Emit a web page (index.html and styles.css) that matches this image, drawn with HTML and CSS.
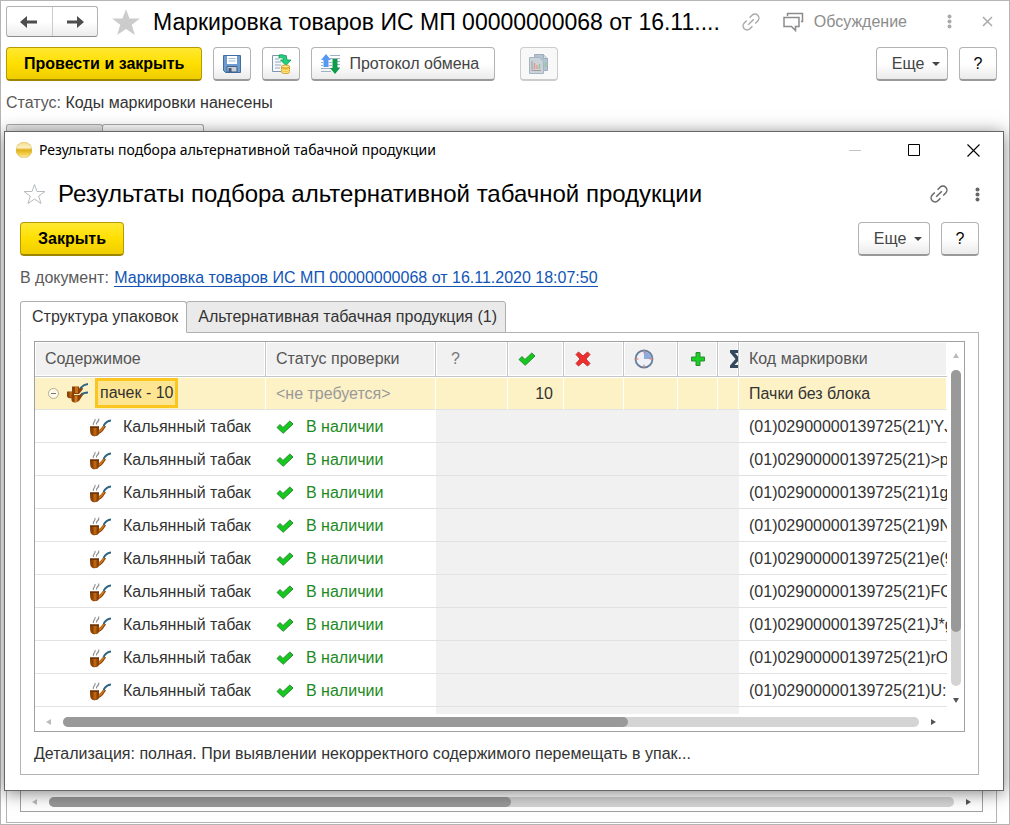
FILE: index.html
```html
<!DOCTYPE html>
<html lang="ru">
<head>
    <meta charset="utf-8">
    <title>Маркировка товаров ИС МП</title>
    <link rel="stylesheet" href="styles.css">
</head>
<body>
    <svg class="sprite" aria-hidden="true">
        <symbol id="check" viewBox="0 0 18 14">
            <path d="M1 7.5 4 4.5 7 7.5 13.8 1 17 4 7.2 13.3z" fill="#14c81e" stroke="#2c8a32" stroke-width="1"/>
        </symbol>
        <symbol id="pipe" viewBox="0 0 21 20">
            <path d="M0 9.500h9v3.500c2-1 3-3.500 5-5l2 1.500c-2 2.500-3.500 6-7 7.500-1 2.500-6 3-7.500 1C0 17 0 13 0 9.500z" fill="#8a4206"/>
            <path d="M3.500 10.500h3v8h-3z" fill="#bd6410"/>
            <path d="M9 13.500c2-1 3-3.500 5-5l1 .800c-2 2-3 5-6 6.500z" fill="#d07a1c"/>
            <path d="M0 9.500h9v1.200H0z" fill="#5e2b05"/>
            <path d="M13.500 9C15 6 17 3.800 21 3.500" stroke="#2f6580" stroke-width="1.800" fill="none"/>
            <path d="M3.500 8C2 5.500 6 5 5 2M6.500 7.500C5.500 5 9.500 5 8.800 1.500" stroke="#8c8c8c" stroke-width="1.100" fill="none"/>
        </symbol>
        <symbol id="pipes" viewBox="0 0 21 20">
            <path d="M5 3.500h7v2l3-1.500 1 2-4 5H5z" fill="#8a4206"/>
            <path d="M8 4h3v6H8z" fill="#c96f17"/>
            <path d="M0 8.500h7v6c-2 1.500-6 1-7-1z" fill="#8a4206"/>
            <path d="M2.500 9h2.500v5.500H2.500z" fill="#bd6410"/>
            <path d="M4.500 12h8l2.500-2.500 1.500 1.500-3.500 5.500c-1.500 3.500-7.500 4-8.500 1z" fill="#8a4206"/>
            <path d="M7.500 12.500h3v6.500h-3z" fill="#d0791d"/>
            <path d="M13 5.500c2-2 3-4 8-4.500M14.500 12c1.500-2 3-2.500 6.500-2.500" stroke="#2f6580" stroke-width="1.800" fill="none"/>
        </symbol>
        <symbol id="link" viewBox="0 0 20 20">
            <g fill="none" stroke="currentColor" stroke-width="1.500" transform="rotate(-45 10 10)">
                <path d="M8 14H4.500a4 4 0 0 1 0-8H8"/>
                <path d="M12 6h3.500a4 4 0 0 1 0 8H12"/>
                <path d="M6 10h8"/>
            </g>
        </symbol>
        <symbol id="dots" viewBox="0 0 5 15">
            <g fill="currentColor">
                <circle cx="2.500" cy="2.500" r="2"/>
                <circle cx="2.500" cy="7.500" r="2"/>
                <circle cx="2.500" cy="12.500" r="2"/>
            </g>
        </symbol>
    </svg>

    <div class="app">
        <header class="app-header">
            <div class="nav">
                <button aria-label="Назад">
                    <svg width="18" height="12" viewBox="0 0 18 12"><path d="M0 6l7-6v4.500h10v3H7V12z" fill="#4d4d4d"/></svg>
                </button>
                <button aria-label="Вперед">
                    <svg width="18" height="12" viewBox="0 0 18 12"><path d="M18 6l-7-6v4.500H1v3h10V12z" fill="#4d4d4d"/></svg>
                </button>
            </div>
            <svg class="app-star" width="28" height="28" viewBox="0 0 30 28"><path d="M15 0l3.800 10.300H30l-8.800 6.700L24.500 28 15 21.500 5.500 28l3.300-11L0 10.300h11.200z" fill="#ccc"/></svg>
            <h1>Маркировка товаров ИС МП 00000000068 от 16.11....</h1>
            <div class="app-tools">
                <svg width="20" height="20"><use href="#link"/></svg>
                <button class="plain discuss">
                    <svg width="21" height="20" viewBox="0 0 21 20" fill="none" stroke="#8c8c8c" stroke-width="1.500"><path d="M4.500 4V1.500h15v8H18M1 5.500h15v9h-3.500v4l-4-4H1z"/></svg>
                    Обсуждение
                </button>
                <button class="plain dots" aria-label="Меню"><svg width="5" height="15"><use href="#dots"/></svg></button>
                <button class="plain" aria-label="Закрыть окно"><svg width="11" height="11" viewBox="0 0 11 11" stroke="#aaa" stroke-width="1.500"><path d="M1 1l9 9M10 1l-9 9"/></svg></button>
            </div>
        </header>

        <div class="commands app-commands">
            <button class="btn primary">Провести и закрыть</button>
            <button class="btn icon" aria-label="Записать">
                <svg width="18" height="18" viewBox="0 0 18 18">
                    <path d="M.5.500h17v17h-15l-2-2z" fill="#6b9bd1" stroke="#3f6ea5"/>
                    <path d="M4 1h10v8H4z" fill="#fff"/>
                    <path d="M5.500 3.500h7M5.500 6h7" stroke="#9db7d6"/>
                    <path d="M4 11.500h10V17H4z" fill="#c9ced4" stroke="#3f5f86"/>
                    <path d="M5.500 13h3v4h-3z" fill="#3b5b83"/>
                </svg>
            </button>
            <button class="btn icon" aria-label="Провести">
                <svg width="20" height="20" viewBox="0 0 20 20">
                    <path d="M1.500 1.500h14v16h-14z" fill="#f6f9fc" stroke="#7d95ad"/>
                    <path d="M4 5h4M4 8h6M4 11h6M4 14h5" stroke="#93a7bb"/>
                    <path d="M8 1c5-1 8 1 8 5h4l-5 5.500L9.500 6h3C12 4 11 3 8 4z" fill="#22d17a" stroke="#0e9b55" stroke-width=".8"/>
                    <path d="M10.500 12v6c0 2 8 2 8 0v-6z" fill="#f2c33c" stroke="#c68f17" stroke-width=".8"/>
                    <ellipse cx="14.500" cy="12.500" rx="4" ry="1.500" fill="#ffe98a" stroke="#c68f17" stroke-width=".8"/>
                    <path d="M10.500 15c0 2 8 2 8 0M10.500 17c0 2 8 2 8 0" fill="none" stroke="#fff0a8" stroke-width=".8"/>
                </svg>
            </button>
            <button class="btn protocol">
                <svg width="21" height="20" viewBox="0 0 21 20">
                    <path d="M10 1.500h10M10 4.500h10M17 7.500h3M17 10.500h3M17 13.500h3M1 8.500h2M1 11.500h2M1 14.500h10M1 17.500h10M9 8.500h3M9 11.500h3" stroke="#9fb0c1"/>
                    <path d="M6 0l5 6H8.500v7h-5V6H1z" fill="#5599f5"/>
                    <path d="M15 20l-5-6h2.500V5h5v9H20z" fill="#0f9b4a"/>
                </svg>
                Протокол обмена
            </button>
            <button class="btn icon report" aria-label="Отчеты" disabled>
                <svg width="20" height="20" viewBox="0 0 20 20">
                    <path d="M5.500.500h9l4 4v12h-13z" fill="#b4c3cf" stroke="#9cafbd"/>
                    <path d="M14.500.500v4h4" fill="#d5dfe6" stroke="#9cafbd"/>
                    <path d="M.500 3.500h10l4 4v12h-14z" fill="#c9d3d9" stroke="#a5b6c2"/>
                    <path d="M3 7v9.500h9" fill="none" stroke="#a99"/>
                    <path d="M5.500 9v6" stroke="#d99" stroke-width="1.500"/>
                    <path d="M8 11v4" stroke="#e6a28c" stroke-width="1.500"/>
                    <path d="M10.500 10v5M16.500 8v5" stroke="#9bc5a0" stroke-width="1.500"/>
                </svg>
            </button>
            <button class="btn more">Еще <span class="caret"></span></button>
            <button class="btn icon help">?</button>
        </div>

        <p class="status"><span>Статус:</span> Коды маркировки нанесены</p>

        <div class="app-tabs">
            <button aria-label="Основное"></button>
            <button class="active" aria-label="Товары"></button>
        </div>
        <div class="app-panel">
            <div class="app-list">
                <div class="hscroll">
                    <span class="arrow left"></span>
                    <div class="track"><div class="thumb app-thumb"></div></div>
                    <span class="arrow right"></span>
                </div>
            </div>
        </div>
    </div>

    <div class="dialog" role="dialog" aria-labelledby="dialog-title">
        <div class="titlebar">
            <span class="ball"></span>
            <span class="caption">Результаты подбора альтернативной табачной продукции</span>
            <button aria-label="Свернуть" disabled><svg width="13" height="13" viewBox="0 0 13 13"><path d="M0 6.500h12" stroke="#c4c4c4"/></svg></button>
            <button aria-label="Развернуть"><svg width="13" height="13" viewBox="0 0 13 13"><path d="M.500.500h11v11h-11z" fill="none" stroke="#000"/></svg></button>
            <button aria-label="Закрыть"><svg width="13" height="13" viewBox="0 0 13 13"><path d="M.5.500l12 12M12.500.500l-12 12" stroke="#000" stroke-width="1.100"/></svg></button>
        </div>

        <div class="dialog-body">
            <div class="dialog-header">
                <svg width="28" height="22" viewBox="0 0 28 22"><path d="M14.500 1.500l2.500 7h8l-6.300 4.600 2.300 7.400-6.500-4.500L8 20.500l2.300-7.400L4 8.500h8z" fill="#fff" stroke="#b5bbc0"/></svg>
                <h2 id="dialog-title">Результаты подбора альтернативной табачной продукции</h2>
                <svg class="dialog-link" width="20" height="20"><use href="#link"/></svg>
                <button class="plain dots" aria-label="Меню"><svg width="5" height="15"><use href="#dots"/></svg></button>
            </div>

            <div class="commands">
                <button class="btn primary">Закрыть</button>
                <button class="btn more">Еще <span class="caret"></span></button>
                <button class="btn icon help">?</button>
            </div>

            <p class="document"><span>В документ:</span> <a href="#document">Маркировка товаров ИС МП 00000000068 от 16.11.2020 18:07:50</a></p>

            <div class="tabs" role="tablist">
                <button class="active" role="tab">Структура упаковок</button>
                <button role="tab">Альтернативная табачная продукция (1)</button>
            </div>

            <div class="panel">
                <div class="list">
                    <div class="list-main">
                        <div class="list-view">
                            <table>
                                <colgroup>
                                    <col class="c-content"><col class="c-status"><col class="c-unknown"><col class="c-ok"><col class="c-bad"><col class="c-wait"><col class="c-add"><col class="c-sum"><col>
                                </colgroup>
                                <thead>
                                    <tr>
                                        <th>Содержимое</th>
                                        <th>Статус проверки</th>
                                        <th class="mark">?</th>
                                        <th><svg width="18" height="14"><use href="#check"/></svg></th>
                                        <th><svg width="18" height="18" viewBox="0 0 18 18"><path d="M2 4.500L4.500 2 9 6l4.500-4L16 4.500 12 9l4 4.500-2.500 2.500L9 12l-4.500 4L2 13.500 6 9z" fill="#ee2f2f" stroke="#c33" stroke-linejoin="round"/></svg></th>
                                        <th><svg width="20" height="20" viewBox="0 0 20 20"><circle cx="10" cy="10" r="8.500" fill="#eef1f5" stroke="#647f9f" stroke-width="1.800"/><path d="M10 10V2.500a7.500 7.500 0 0 1 7.500 7.500z" fill="#8faadb"/><path d="M10 1v3.500M10 15.500V19M1 10h3.500M15.500 10H19" stroke="#e8705f"/></svg></th>
                                        <th class="add"><svg width="14" height="14" viewBox="0 0 14 14"><path d="M5 .500h4V5h4.500v4H9v4.500H5V9H.5V5H5z" fill="#19cf22" stroke="#2c8a32"/></svg></th>
                                        <th class="sum"><svg width="14" height="18" viewBox="0 0 14 18"><path d="M0 0h13v5h-1.500L10.500 3H5l5 6-5.500 6h6l1-2H13v5H0v-2.500L5.500 9 0 2.500z" fill="#34495e"/></svg></th>
                                        <th>Код маркировки</th>
                                    </tr>
                                </thead>
                                <tbody>
                                    <tr class="selected">
                                        <td class="group"><div><svg width="11" height="11" viewBox="0 0 11 11"><circle cx="5.500" cy="5.500" r="5" fill="#fffbe8" stroke="#b5ad93"/><path d="M3 5.500h5" stroke="#777"/></svg><svg class="pipe" width="21" height="20"><use href="#pipes"/></svg><span class="current">пачек - 10</span></div></td>
                                        <td class="none">&lt;не требуется&gt;</td>
                                        <td></td><td class="num">10</td><td></td><td></td><td></td><td></td>
                                        <td>Пачки без блока</td>
                                    </tr>
                                    <tr>
                                        <td class="item"><div><svg width="21" height="20"><use href="#pipe"/></svg>Кальянный табак</div></td>
                                        <td class="ok"><div><svg width="18" height="14"><use href="#check"/></svg>В наличии</div></td>
                                        <td class="off" colspan="6"></td>
                                        <td>(01)02900000139725(21)'YJ</td>
                                    </tr>
                                    <tr>
                                        <td class="item"><div><svg width="21" height="20"><use href="#pipe"/></svg>Кальянный табак</div></td>
                                        <td class="ok"><div><svg width="18" height="14"><use href="#check"/></svg>В наличии</div></td>
                                        <td class="off" colspan="6"></td>
                                        <td>(01)02900000139725(21)&gt;p</td>
                                    </tr>
                                    <tr>
                                        <td class="item"><div><svg width="21" height="20"><use href="#pipe"/></svg>Кальянный табак</div></td>
                                        <td class="ok"><div><svg width="18" height="14"><use href="#check"/></svg>В наличии</div></td>
                                        <td class="off" colspan="6"></td>
                                        <td>(01)02900000139725(21)1g</td>
                                    </tr>
                                    <tr>
                                        <td class="item"><div><svg width="21" height="20"><use href="#pipe"/></svg>Кальянный табак</div></td>
                                        <td class="ok"><div><svg width="18" height="14"><use href="#check"/></svg>В наличии</div></td>
                                        <td class="off" colspan="6"></td>
                                        <td>(01)02900000139725(21)9N</td>
                                    </tr>
                                    <tr>
                                        <td class="item"><div><svg width="21" height="20"><use href="#pipe"/></svg>Кальянный табак</div></td>
                                        <td class="ok"><div><svg width="18" height="14"><use href="#check"/></svg>В наличии</div></td>
                                        <td class="off" colspan="6"></td>
                                        <td>(01)02900000139725(21)e(9</td>
                                    </tr>
                                    <tr>
                                        <td class="item"><div><svg width="21" height="20"><use href="#pipe"/></svg>Кальянный табак</div></td>
                                        <td class="ok"><div><svg width="18" height="14"><use href="#check"/></svg>В наличии</div></td>
                                        <td class="off" colspan="6"></td>
                                        <td>(01)02900000139725(21)FC</td>
                                    </tr>
                                    <tr>
                                        <td class="item"><div><svg width="21" height="20"><use href="#pipe"/></svg>Кальянный табак</div></td>
                                        <td class="ok"><div><svg width="18" height="14"><use href="#check"/></svg>В наличии</div></td>
                                        <td class="off" colspan="6"></td>
                                        <td>(01)02900000139725(21)J*g</td>
                                    </tr>
                                    <tr>
                                        <td class="item"><div><svg width="21" height="20"><use href="#pipe"/></svg>Кальянный табак</div></td>
                                        <td class="ok"><div><svg width="18" height="14"><use href="#check"/></svg>В наличии</div></td>
                                        <td class="off" colspan="6"></td>
                                        <td>(01)02900000139725(21)rO</td>
                                    </tr>
                                    <tr>
                                        <td class="item"><div><svg width="21" height="20"><use href="#pipe"/></svg>Кальянный табак</div></td>
                                        <td class="ok"><div><svg width="18" height="14"><use href="#check"/></svg>В наличии</div></td>
                                        <td class="off" colspan="6"></td>
                                        <td>(01)02900000139725(21)U:2</td>
                                    </tr>
                                    <tr class="rest"><td></td><td></td><td class="off" colspan="6"></td><td></td></tr>
                                </tbody>
                            </table>
                        </div>
                        <div class="vscroll">
                            <span class="arrow up"></span>
                            <div class="track"><div class="thumb"></div></div>
                            <span class="arrow down"></span>
                        </div>
                    </div>
                    <div class="hscroll">
                        <span class="arrow left"></span>
                        <div class="track"><div class="thumb"></div></div>
                        <span class="arrow right"></span>
                    </div>
                </div>
                <p class="details">Детализация: полная. При выявлении некорректного содержимого перемещать в упак...</p>
            </div>
        </div>
    </div>
</body>
</html>
```
FILE: styles.css
```css
body {
    margin: 0;
    font-family: "Liberation Sans", Arial, sans-serif;
    font-size: 16px;
    line-height: 20px;
    color: #333;
    background: #fff;
}

* {
    box-sizing: border-box;
}

.sprite {
    display: none;
}

svg {
    flex: none;
}

h1,
h2,
p {
    margin: 0;
}

h1,
h2 {
    line-height: 28px;
    font-weight: normal;
    color: #000;
    white-space: nowrap;
}

h1 {
    font-size: 23px;
}

h2 {
    font-size: 24px;
}

button {
    font: inherit;
    color: inherit;
    padding: 0;
    cursor: pointer;
}

/* main window */
.app {
    display: flex;
    flex-direction: column;
    min-height: 100vh;
    border: 1px solid #b5b5b5;
    padding: 5px 12px 1px 5px;
}

.app-header {
    display: flex;
    align-items: center;
    height: 31px;
}

.nav {
    flex: none;
    display: flex;
    width: 92px;
    height: 31px;
    border: 1px solid #b3b3b3;
    border-bottom-color: #8c8c8c;
    border-radius: 3px;
    background: linear-gradient(#fff 50%, #ececec);
}

.nav button {
    flex: 1;
    display: flex;
    align-items: center;
    justify-content: center;
    border: 0;
    background: none;
}

.nav button + button {
    border-left: 1px solid #ccc;
}

.app-star {
    margin: 0 13px 0 14px;
}

.app-tools {
    display: flex;
    align-items: center;
    margin-left: auto;
    padding-right: 4px;
    color: #aaa;
}

.plain {
    display: flex;
    align-items: center;
    border: 0;
    background: none;
}

.discuss {
    gap: 10px;
    margin: 0 40px 0 22px;
    color: #8c8c8c;
}

.app-tools .dots {
    margin-right: 30px;
}

.commands {
    display: flex;
    align-items: center;
    gap: 11px;
}

.app-commands {
    margin-top: 10px;
}

.btn {
    flex: none;
    display: flex;
    align-items: center;
    justify-content: center;
    height: 34px;
    border: 1px solid #b3b3b3;
    border-bottom: 2px solid #999;
    border-radius: 4px;
    background: linear-gradient(#fff 50%, #ebebeb);
    color: #444;
    white-space: nowrap;
}

.btn.primary {
    padding: 0 17px;
    border: 1px solid #b59b00;
    border-bottom: 2px solid #9c8600;
    background: linear-gradient(#ffe833, #ffdf00 50%, #efcd00);
    color: #000;
    font-weight: bold;
}

.btn.icon {
    width: 38px;
}

.btn.protocol {
    gap: 8px;
    padding: 0 15px 0 8px;
}

.btn.report {
    margin-left: 14px;
    border-color: #ccc;
    background: #f8f8f8;
}

.btn.more {
    width: 72px;
    gap: 8px;
    padding-left: 8px;
    margin-left: auto;
}

.btn.help {
    color: #000;
}

.caret {
    border: 4px solid transparent;
    border-top-color: #444;
    border-bottom: 0;
}

.status {
    margin-top: 12px;
}

.status span,
.document span {
    color: #5a5a5a;
}

.document span {
    margin-right: 1px;
}

.app-tabs {
    display: flex;
    margin-top: 11px;
}

.app-tabs button {
    width: 97px;
    height: 32px;
    border: 1px solid #aaa;
    border-bottom: 0;
    border-radius: 3px 3px 0 0;
    background: #e9e9e9;
}

.app-tabs .active {
    width: 102px;
    margin-left: -1px;
    background: #fff;
}

.app-panel {
    flex: 1;
    display: flex;
    border: 1px solid #b3b3b3;
    padding: 8px 13px 10px;
}

.app-list {
    flex: 1;
    display: flex;
    align-items: flex-end;
    border: 1px solid #a0a0a0;
}

/* scrollbars */
.hscroll {
    flex: 1;
    display: flex;
    align-items: center;
    height: 17px;
    padding: 0 11px 1px;
}

.track {
    flex: 1;
    border-radius: 5px;
    background: #d4d4d4;
}

.thumb {
    border-radius: 5px;
    background: #999;
}

.hscroll .track {
    height: 10px;
    margin: 0 12px;
}

.hscroll .thumb {
    width: 66%;
    height: 10px;
}

.hscroll .app-thumb {
    width: 51%;
}

.arrow {
    flex: none;
    border: 3px solid transparent;
}

.arrow.left {
    border-right: 5px solid #bbb;
    border-left: 0;
}

.arrow.right {
    border-left: 5px solid #555;
    border-right: 0;
}

.arrow.up {
    border-bottom: 5px solid #bbb;
    border-top: 0;
}

.arrow.down {
    border-top: 5px solid #555;
    border-bottom: 0;
}

.vscroll {
    display: flex;
    flex-direction: column;
    align-items: center;
    width: 17px;
    padding: 11px 0;
}

.vscroll .track {
    width: 10px;
    margin: 12px 0;
}

.vscroll .thumb {
    height: 83%;
}

/* dialog window */
.dialog {
    position: absolute;
    top: 131px;
    left: 4px;
    right: 6px;
    border: 1px solid #666;
    background: #fff;
    box-shadow: 0 2px 16px rgba(0, 0, 0, .5);
}

.titlebar {
    display: flex;
    align-items: center;
    height: 36px;
    padding-left: 11px;
    font-family: "Noto Sans", "Segoe UI", sans-serif;
    font-size: 14px;
    color: #000;
}

.titlebar .caption {
    margin: 0 auto 0 7px;
}

.titlebar button {
    display: flex;
    align-items: center;
    justify-content: center;
    width: 59px;
    height: 36px;
    border: 0;
    background: none;
}

.ball {
    width: 16px;
    height: 16px;
    border-radius: 50%;
    background: linear-gradient(#f3dc8a, #fbf0c0 35%, #dfb01c 50%, #f0c93c 70%, #fbeeb5);
    box-shadow: inset 0 0 1px #b98e1a;
}

.dialog-body {
    padding: 12px 24px 15px 15px;
}

.dialog-header {
    display: flex;
    align-items: center;
    height: 28px;
}

.dialog-header h2 {
    margin-left: 10px;
}

.dialog-link {
    margin-left: auto;
    margin-right: 26px;
    color: #666;
}

.dialog-header .dots {
    margin-right: -1px;
    color: #666;
}

.dialog-body .commands {
    margin-top: 14px;
}

.document {
    margin-top: 12px;
}

.document a {
    color: #1155b5;
    text-decoration: none;
    border-bottom: 1px solid #1155b5;
}

.tabs {
    display: flex;
    margin-top: 13px;
}

.tabs button {
    height: 32px;
    margin: 0 0 -1px -1px;
    padding: 0 8px 0 11px;
    border: 1px solid #b0b0b0;
    border-radius: 3px 3px 0 0;
    background: #eaeaea;
}

.tabs .active {
    margin-left: 0;
    border-bottom-color: #fff;
    background: #fff;
    z-index: 1;
}

.panel {
    padding: 8px 13px 10px;
    border: 1px solid #b3b3b3;
}

.list {
    border: 1px solid #a0a0a0;
}

.list > .hscroll {
    padding-right: 28px;
}

.list-main {
    display: flex;
}

.list-view {
    flex: 1;
    min-width: 0;
    overflow: hidden;
}

table {
    width: 100%;
    table-layout: fixed;
    border-collapse: separate;
    border-spacing: 0;
}

.c-content { width: 231px; }
.c-status { width: 170px; }
.c-unknown { width: 72px; }
.c-ok { width: 56px; }
.c-bad { width: 60px; }
.c-wait { width: 54px; }
.c-add { width: 40px; }
.c-sum { width: 21px; }

th,
td {
    height: 33px;
    padding: 0 0 0 10px;
    overflow: hidden;
    text-align: left;
    white-space: nowrap;
    border-bottom: 1px solid #e2e2e2;
}

td {
    padding-top: 2px;
}

th {
    height: 35px;
    font-weight: normal;
    color: #555;
    border-right: 1px solid #c6c6c6;
    border-bottom-color: #c6c6c6;
    background: #f1f1f1;
    box-shadow: inset 0 0 0 1px #fff;
}

th:last-child {
    border-right: 0;
}

th svg,
td svg {
    display: block;
}

th.mark {
    padding-left: 15px;
    color: #777;
}

th.add {
    padding-left: 13px;
}

th.sum {
    padding-left: 12px;
}

.selected td {
    border-right: 1px solid #fff;
    background: #fdf1c6;
    box-shadow: inset 0 1px #fff;
}

.group div,
.item div,
.ok div {
    display: flex;
    align-items: center;
}

td.group {
    padding: 0 0 0 13px;
}

.group .pipe {
    margin: 0 7px 0 8px;
}

.current {
    padding: 2px;
    border: 3px solid #fbc71f;
    background: #fee592;
}

.none {
    color: #999;
}

.num {
    padding-right: 10px;
    text-align: right;
}

.item {
    padding-left: 55px;
}

.item div {
    gap: 12px;
}

.ok {
    color: #1c8a22;
}

.ok div {
    gap: 12px;
}

.off {
    background: #f1f1f1;
}

.rest td {
    height: 7px;
    border: 0;
}

.details {
    margin-top: 12px;
}
```
